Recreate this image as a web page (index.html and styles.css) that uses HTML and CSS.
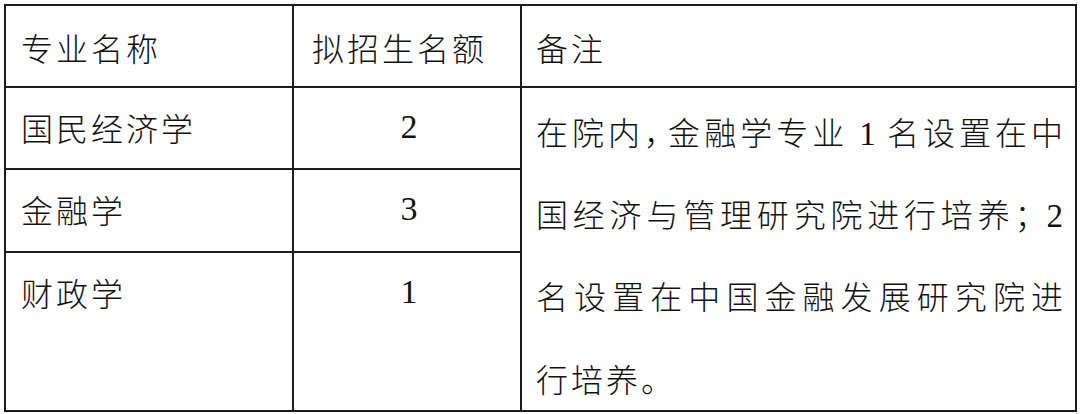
FILE: index.html
```html
<!DOCTYPE html>
<html lang="zh-CN">
<head>
<meta charset="utf-8">
<link rel="stylesheet" href="styles.css">
</head>
<body>
<table class="quota">
  <colgroup>
    <col class="c-major">
    <col class="c-num">
    <col class="c-note">
  </colgroup>
  <tr class="r-head">
    <td class="major">专业名称</td>
    <td class="head-num">拟招生名额</td>
    <td class="note">备注</td>
  </tr>
  <tr class="r-a">
    <td class="major">国民经济学</td>
    <td class="num">2</td>
    <td class="note body-note" rowspan="3">
      <span class="ln just">在院内<span class="comma">，</span>金融学专业 <span class="lat">1</span> 名设置在中</span>
      <span class="ln just">国经济与管理研究院进行培养；<span class="lat">2</span></span>
      <span class="ln just">名设置在中国金融发展研究院进</span>
      <span class="ln last">行培养。</span>
    </td>
  </tr>
  <tr class="r-b">
    <td class="major">金融学</td>
    <td class="num">3</td>
  </tr>
  <tr class="r-c">
    <td class="major">财政学</td>
    <td class="num">1</td>
  </tr>
</table>
</body>
</html>
```

FILE: styles.css
```css
html, body {
  margin: 0;
  padding: 0;
  background: #ffffff;
}

body {
  padding: 4px 0 0 4px;
  font-family: "Noto Sans CJK SC", "Noto Sans", sans-serif;
  color: #111111;
}

.quota {
  border-collapse: collapse;
  table-layout: fixed;
  width: 1071px;
}

.c-major { width: 288px; }
.c-num { width: 228px; }
.c-note { width: 555px; }

.quota td {
  border: 2px solid #1c1c1c;
  padding: 0;
  vertical-align: top;
  font-size: 32px;
  font-weight: 300;
  line-height: 78px;
  letter-spacing: 3px;
  white-space: nowrap;
}

.r-head { height: 82px; }
.r-a { height: 82px; }
.r-b { height: 83px; }
.r-c { height: 159px; }

.r-head td {
  padding-top: 2px;
}

.quota td.major {
  padding-left: 15px;
}

.quota td.head-num {
  padding-left: 18px;
}

.quota td.num {
  text-align: center;
  font-family: "Liberation Serif", serif;
  font-weight: 400;
  font-size: 34px;
  letter-spacing: 0;
  padding-left: 4px;
}

.quota td.note {
  padding-left: 14px;
  padding-right: 12px;
}

.quota td.body-note {
  padding-top: 2px;
  line-height: 82px;
}

.ln {
  display: block;
}

.ln.just {
  text-align: justify;
  text-align-last: justify;
  letter-spacing: 0;
}

.ln.last {
  line-height: 60px;
  padding-top: 12px;
}

.comma {
  letter-spacing: -12px;
}

.lat {
  font-family: "Liberation Serif", serif;
  font-weight: 400;
  font-size: 33px;
  line-height: 0;
}
```
